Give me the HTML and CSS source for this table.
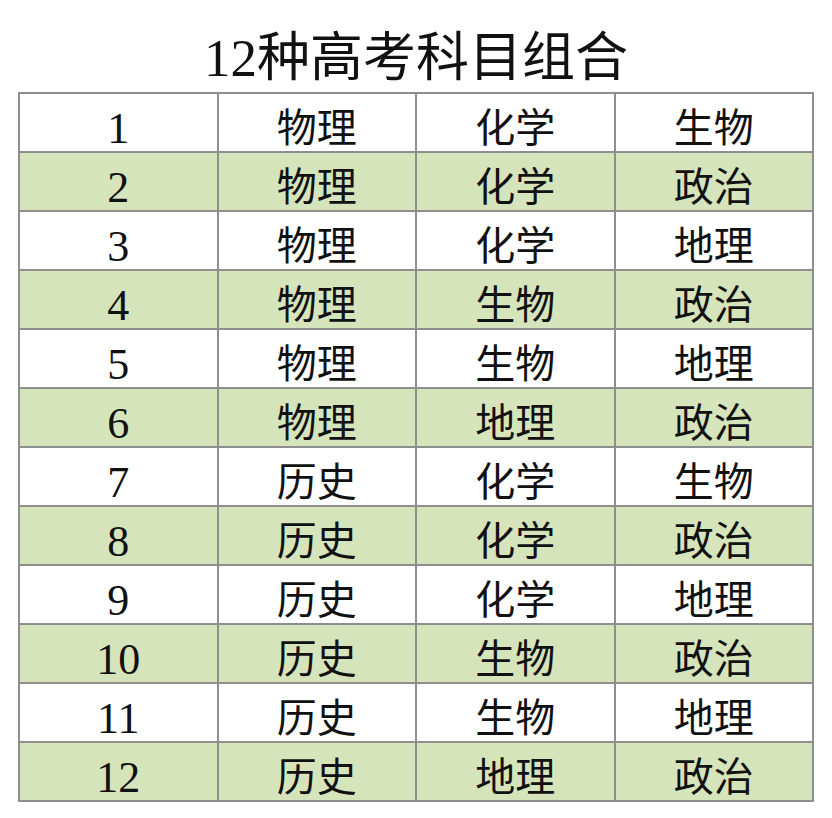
FILE: index.html
```html
<!DOCTYPE html>
<html lang="zh">
<head>
<meta charset="utf-8">
<link rel="stylesheet" href="styles.css">
</head>
<body>
<h1 class="title">12种高考科目组合</h1>
<table class="combos">
<tbody>
<tr><td class="num">1</td><td>物理</td><td>化学</td><td>生物</td></tr>
<tr class="alt"><td class="num">2</td><td>物理</td><td>化学</td><td>政治</td></tr>
<tr><td class="num">3</td><td>物理</td><td>化学</td><td>地理</td></tr>
<tr class="alt"><td class="num">4</td><td>物理</td><td>生物</td><td>政治</td></tr>
<tr><td class="num">5</td><td>物理</td><td>生物</td><td>地理</td></tr>
<tr class="alt"><td class="num">6</td><td>物理</td><td>地理</td><td>政治</td></tr>
<tr><td class="num">7</td><td>历史</td><td>化学</td><td>生物</td></tr>
<tr class="alt"><td class="num">8</td><td>历史</td><td>化学</td><td>政治</td></tr>
<tr><td class="num">9</td><td>历史</td><td>化学</td><td>地理</td></tr>
<tr class="alt"><td class="num">10</td><td>历史</td><td>生物</td><td>政治</td></tr>
<tr><td class="num">11</td><td>历史</td><td>生物</td><td>地理</td></tr>
<tr class="alt"><td class="num">12</td><td>历史</td><td>地理</td><td>政治</td></tr>
</tbody>
</table>
</body>
</html>
```
FILE: styles.css
```css
html, body {
  margin: 0;
  padding: 0;
  background: #ffffff;
}
body {
  width: 832px;
  height: 818px;
  font-family: "Liberation Serif", "Noto Sans CJK SC", serif;
  color: #111;
}
.title {
  margin: 0;
  height: 92px;
  box-sizing: border-box;
  padding-top: 30px;
  font-size: 53px;
  line-height: 56px;
  font-weight: normal;
  text-align: center;
  letter-spacing: 0;
}
.combos {
  margin-left: 18px;
  width: 796px;
  border-collapse: collapse;
  table-layout: fixed;
}
.combos td {
  height: 59px;
  padding: 12px 0 0 0;
  box-sizing: border-box;
  border: 2px solid #8e8e8e;
  text-align: center;
  vertical-align: middle;
  font-size: 40px;
  line-height: 44px;
  width: 25%;
}
.combos td.num {
  font-size: 44px;
}
.combos tr.alt td {
  background: #d6e4bc;
}
```
